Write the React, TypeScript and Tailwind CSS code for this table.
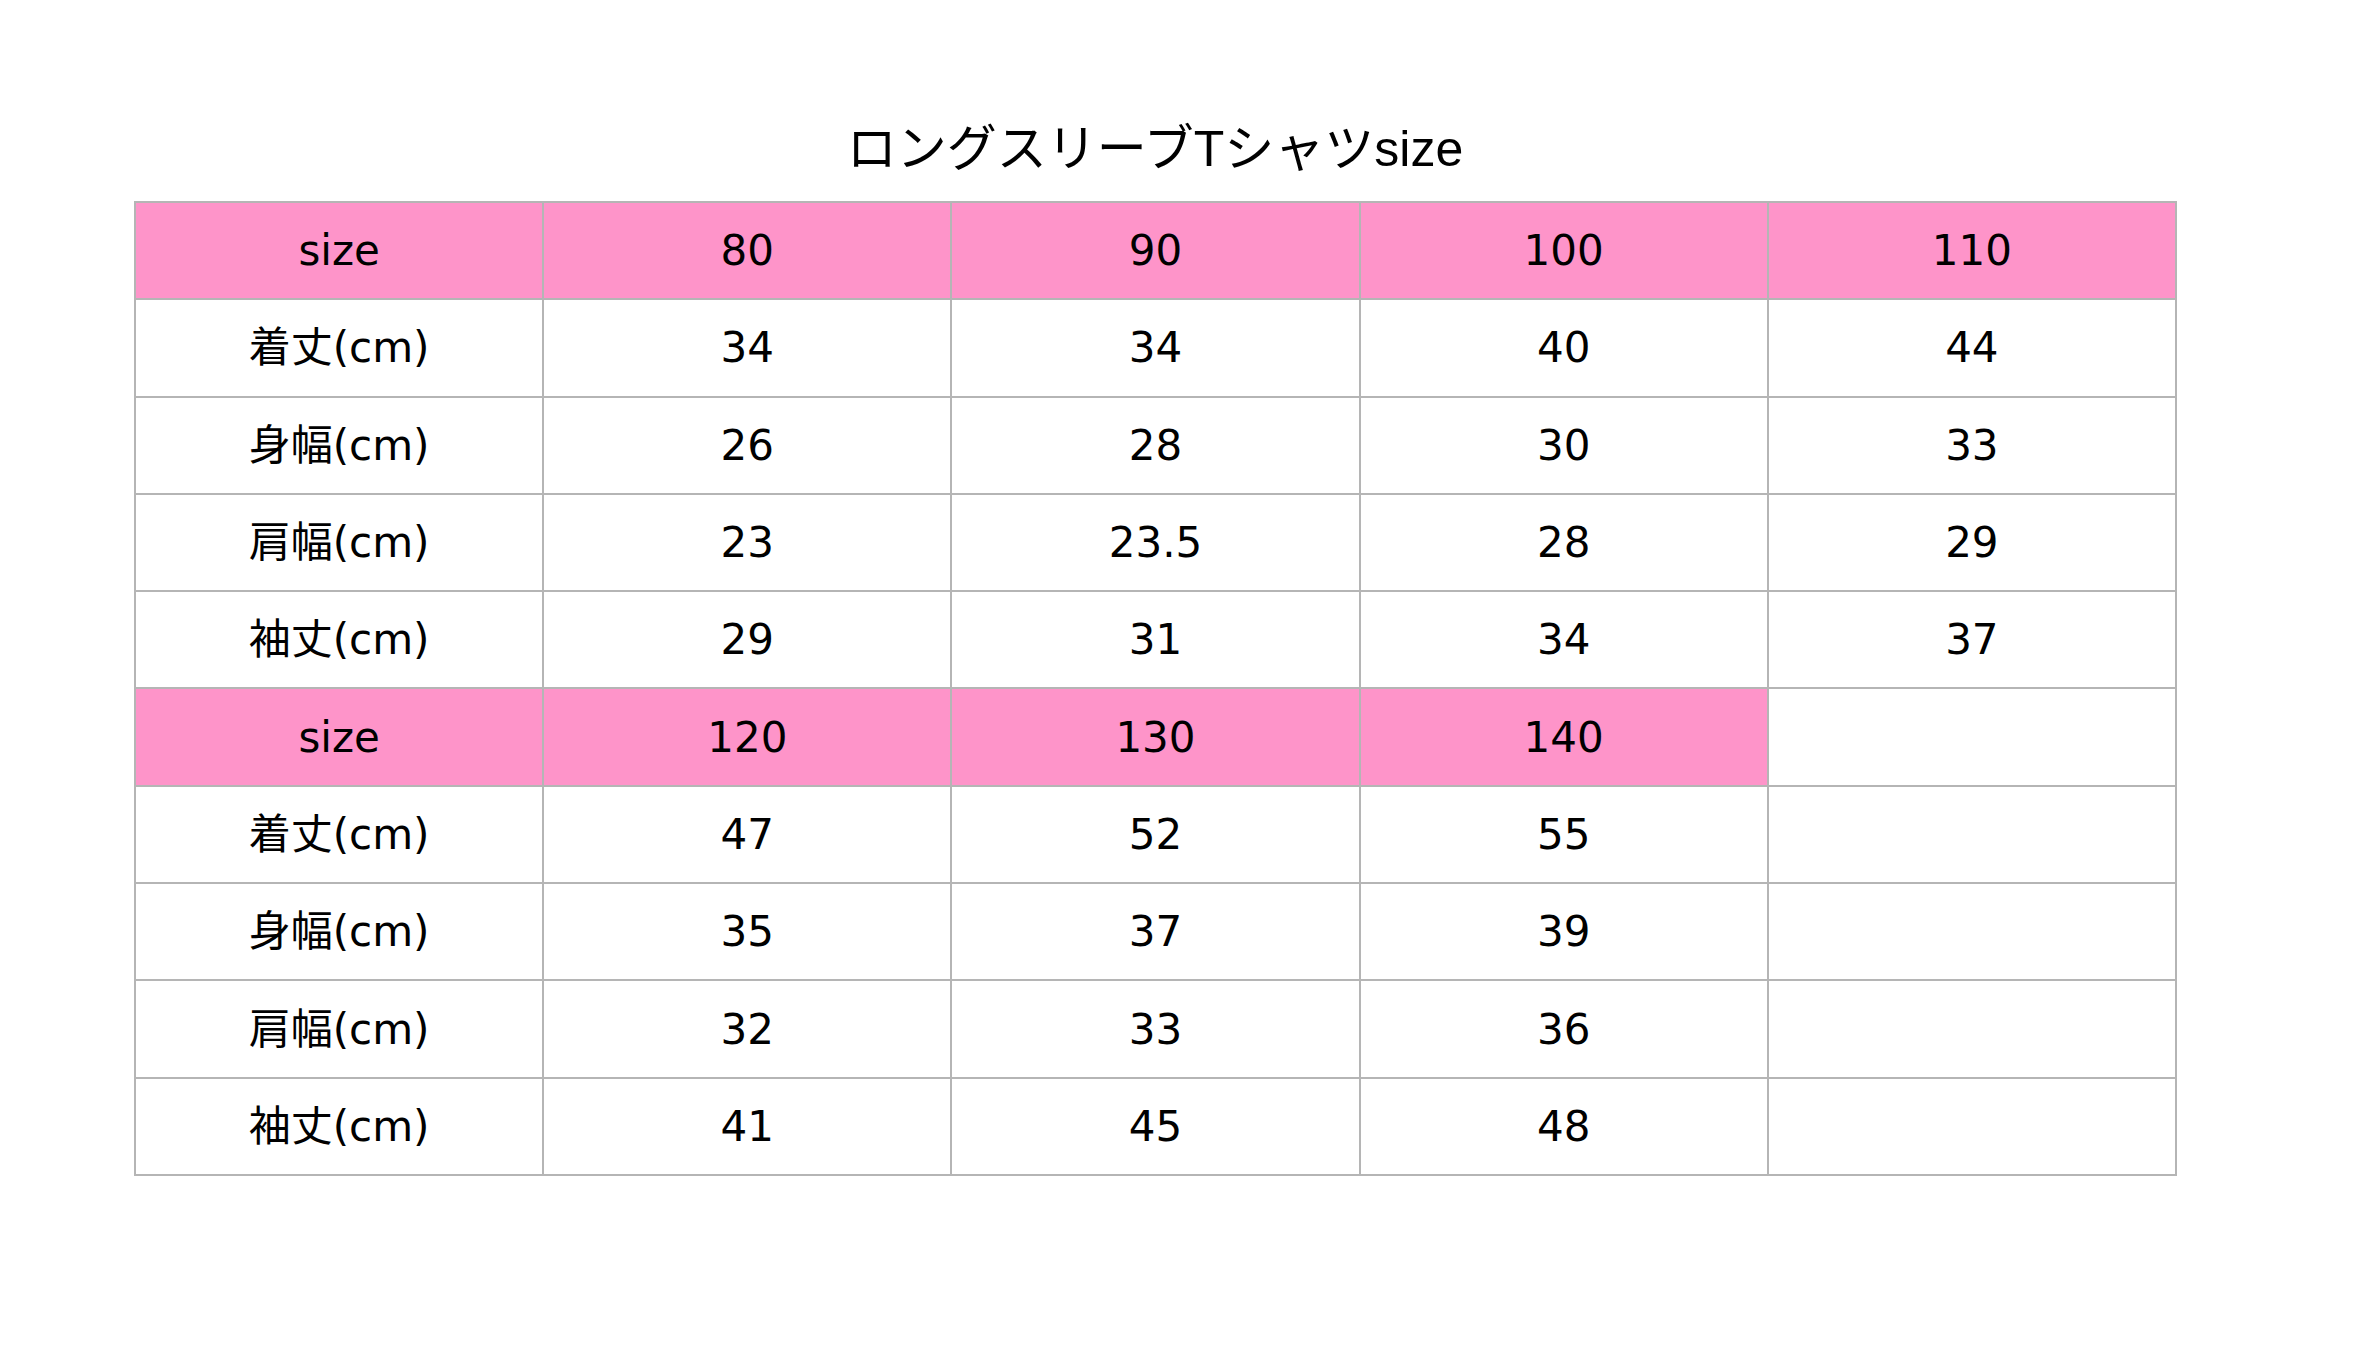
import React from 'react';

type Row = { label: string; values: string[]; header?: boolean };

const rows: Row[] = [
  { label: 'size', values: ['80', '90', '100', '110'], header: true },
  { label: '着丈(cm)', values: ['34', '34', '40', '44'] },
  { label: '身幅(cm)', values: ['26', '28', '30', '33'] },
  { label: '肩幅(cm)', values: ['23', '23.5', '28', '29'] },
  { label: '袖丈(cm)', values: ['29', '31', '34', '37'] },
  { label: 'size', values: ['120', '130', '140', ''], header: true },
  { label: '着丈(cm)', values: ['47', '52', '55', ''] },
  { label: '身幅(cm)', values: ['35', '37', '39', ''] },
  { label: '肩幅(cm)', values: ['32', '33', '36', ''] },
  { label: '袖丈(cm)', values: ['41', '45', '48', ''] },
];

const cellFont = { fontFamily: '"DejaVu Sans", "Noto Sans CJK JP", sans-serif' };

export default function App() {
  return (
    <div className="w-[2369px] h-[1358px] bg-white pt-[113px]">
      <div
        className="w-[2042px] ml-[134px] h-[72px] leading-[72px] text-center text-[50px] text-black mb-[16px]"
        style={{ fontFamily: '"Liberation Sans", "Noto Sans CJK JP", sans-serif' }}
      >
        ロングスリーブTシャツsize
      </div>
      <table className="ml-[134px] w-[2043px] table-fixed border-collapse" style={cellFont}>
        <tbody>
          {rows.map((row, i) => (
            <tr key={i} className="h-[97.3px]">
              <td
                className={`border-2 border-[#b5b5b5] text-center text-[42px] text-black p-0 ${row.header ? 'bg-[#fe94c9]' : 'bg-white'}`}
              >
                {row.label}
              </td>
              {row.values.map((v, j) => {
                const pink = row.header && (j < 3 || v !== '');
                return (
                  <td
                    key={j}
                    className={`border-2 border-[#b5b5b5] text-center text-[42px] text-black p-0 ${pink ? 'bg-[#fe94c9]' : 'bg-white'}`}
                  >
                    {v}
                  </td>
                );
              })}
            </tr>
          ))}
        </tbody>
      </table>
    </div>
  );
}
